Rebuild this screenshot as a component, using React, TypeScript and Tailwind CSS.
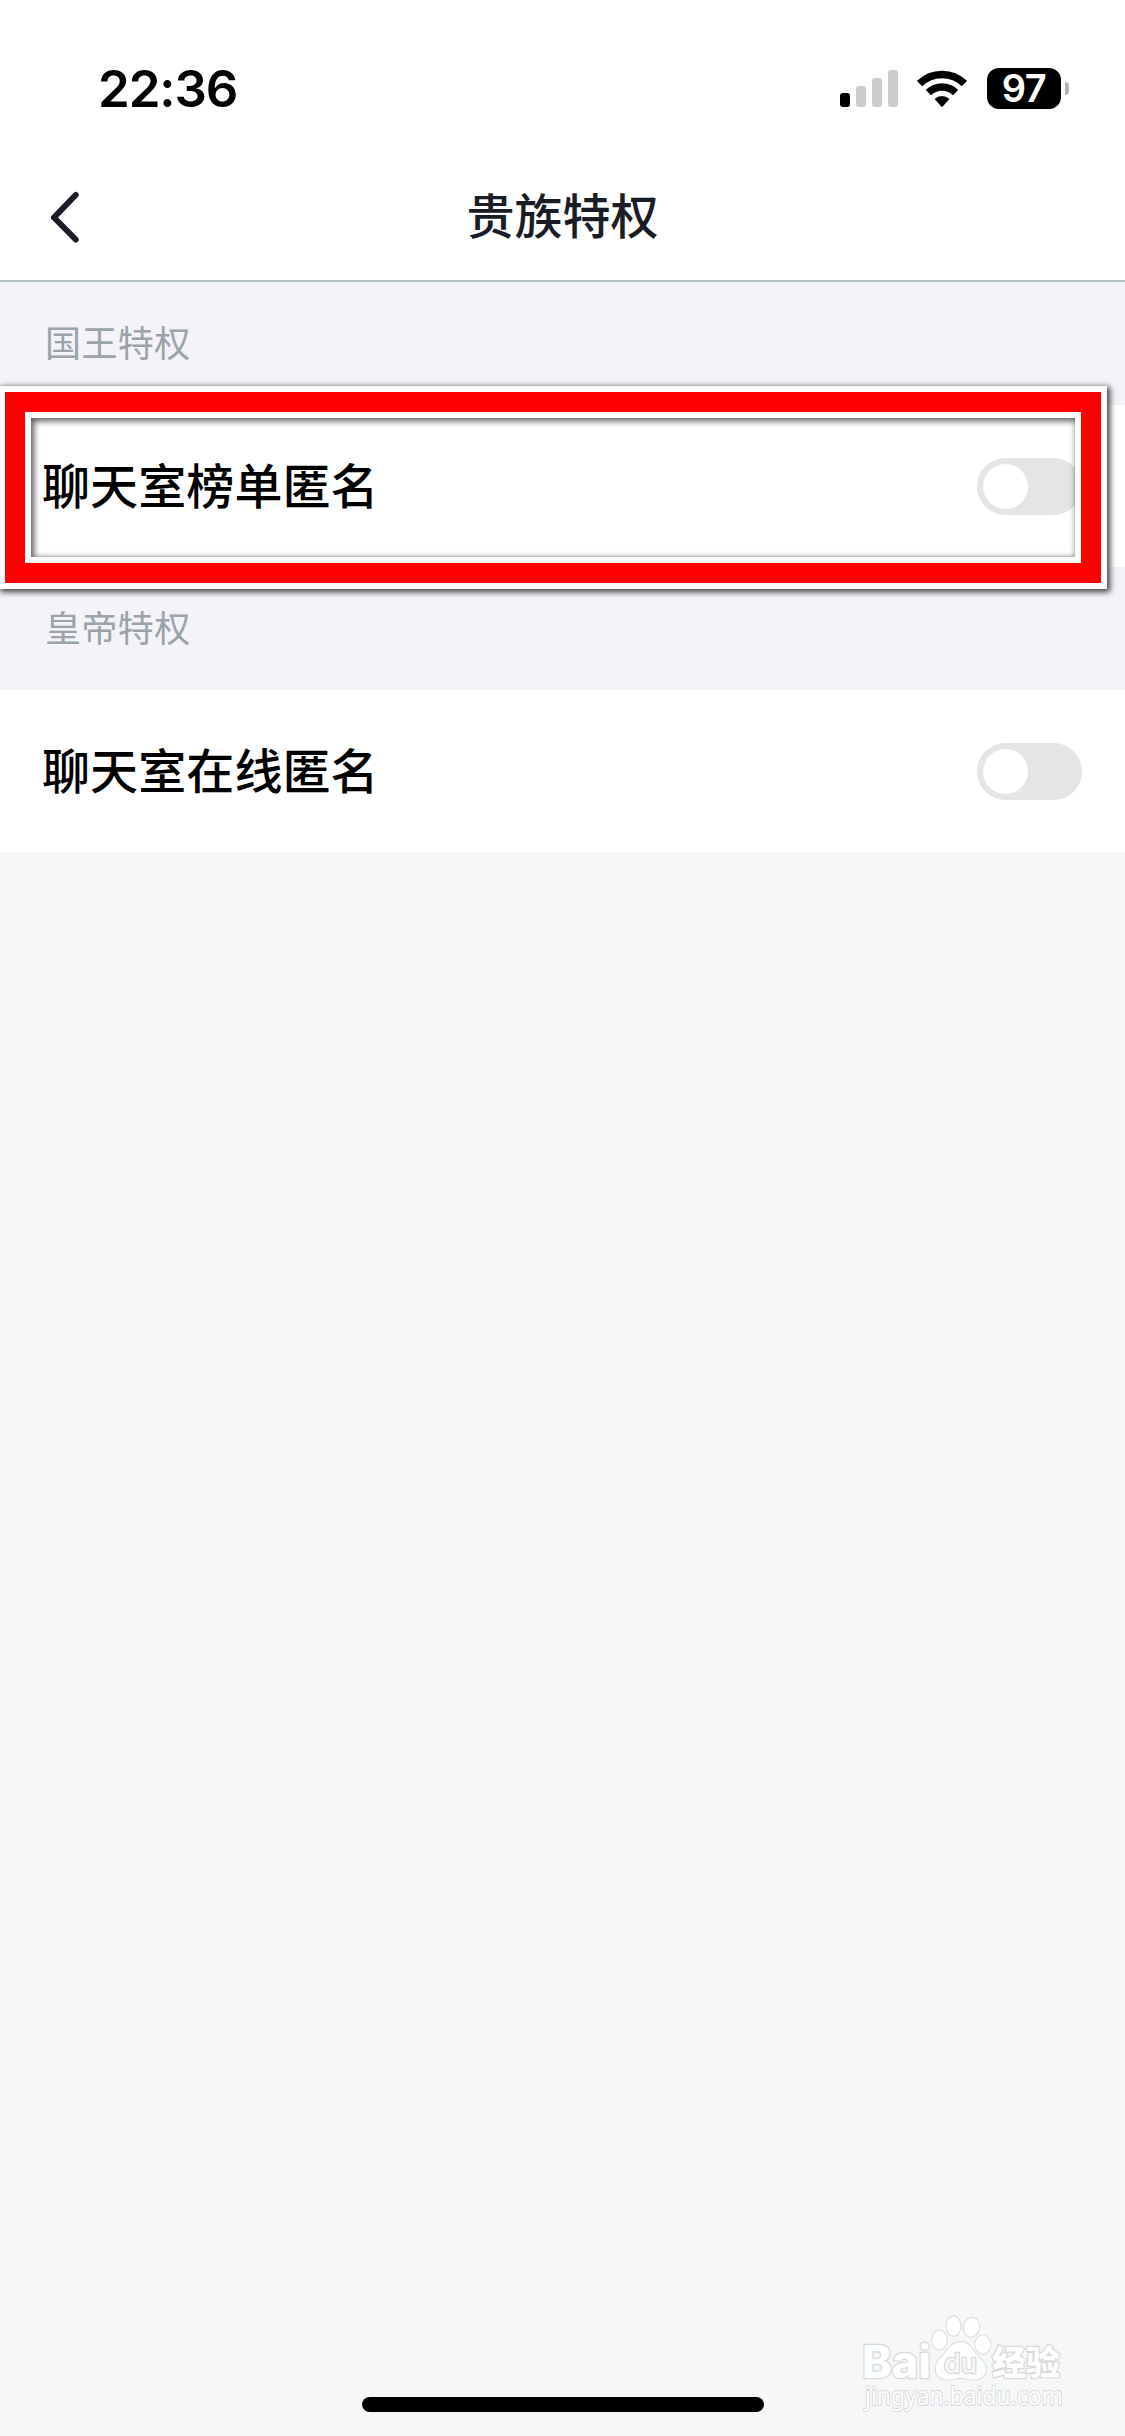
import React from 'react'

const SECTIONS = [
    { label: '国王特权', item: '聊天室榜单匿名', highlighted: true },
    { label: '皇帝特权', item: '聊天室在线匿名', highlighted: false },
]

function StatusBar() {
    return (
        <div className="flex h-[160px] justify-between pl-[98px] pr-[56px]">
            <span className="pt-[58px] font-['Inter',sans-serif] text-[51px] font-semibold leading-[62px] tracking-[-1.1px] text-black">
                22:36
            </span>
            <div className="flex h-[41px] mt-[68px] items-start">
                {/* Signal */}
                <div className="flex h-[39px] items-end gap-[6px]">
                    <div className="h-[14px] w-[10px] rounded-[3px] bg-black" />
                    <div className="h-[21px] w-[10px] rounded-[3px] bg-[#cccccc]" />
                    <div className="h-[29px] w-[10px] rounded-[3px] bg-[#cccccc]" />
                    <div className="h-[37px] w-[10px] rounded-[3px] bg-[#cccccc]" />
                </div>
                {/* Wifi */}
                <svg className="ml-[19px] mt-[2px]" width="50" height="37" viewBox="0 0 50 37" fill="none">
                    <path d="M2.6 13.6A32 32 0 0 1 47.4 13.6" stroke="#000" strokeWidth="7.6" />
                    <path d="M11.4 22.6A19.4 19.4 0 0 1 38.6 22.6" stroke="#000" strokeWidth="7.4" />
                    <path d="M17.6 29A10.8 10.8 0 0 1 32.4 29L25.7 36.4Q25 37 24.3 36.4Z" fill="#000" />
                </svg>
                {/* Battery */}
                <div className="ml-[20px] flex h-[41px] w-[74px] items-center justify-center rounded-[12px] bg-black font-['Inter',sans-serif] text-[38px] font-semibold leading-[41px] tracking-[-0.5px] text-white">
                    97
                </div>
                <div className="ml-[4px] mt-[14px] h-[13px] w-[4px] rounded-r-full bg-[#b3b3b3]" />
            </div>
        </div>
    )
}

function NavBar() {
    return (
        <div className="grid h-[122px] grid-cols-[200px_1fr_200px] border-b-2 border-[#b8c2ca]">
            <svg className="ml-[48px] mt-[29px]" width="36" height="56" viewBox="0 0 36 56" fill="none">
                <path d="M27.7 6L6 28.5L27.7 50.5" stroke="#1a1d26" strokeWidth="6" strokeLinecap="round" strokeLinejoin="round" />
            </svg>
            <h1 className="pt-[17px] text-center text-[48px] font-medium leading-[72px] text-[#1a1d26]">贵族特权</h1>
        </div>
    )
}

function Switch() {
    return (
        <div className="mt-[53px] h-[57px] w-[105px] rounded-full bg-[#e5e5e5] p-[6px]">
            <div className="size-[45px] rounded-full bg-white" />
        </div>
    )
}

function HighlightFrame() {
    return (
        <div className="absolute left-[-1px] top-[-19px] h-[203px] w-[1108px] border-[6px] border-white shadow-[2px_2px_6px_1px_rgba(0,0,0,0.75)]">
            <div className="h-full w-full border-[20px] border-[#ff0000]">
                <div className="h-full w-full border-[6px] border-white">
                    <div className="h-full w-full shadow-[inset_2px_2px_6px_1px_rgba(0,0,0,0.65)]" />
                </div>
            </div>
        </div>
    )
}

function Watermark() {
    return (
        <svg className="absolute left-[855px] top-[2305px]" width="220" height="125" viewBox="855 2305 220 125">
            <g fill="#fdfefe" stroke="#d6d8d9" strokeWidth="2.4" paintOrder="stroke" strokeLinejoin="round">
                <text x="862" y="2378" fontFamily="Inter, sans-serif" fontSize="45" fontWeight="800" textLength="69" lengthAdjust="spacingAndGlyphs">Bai</text>
                <g strokeWidth="1.8">
                    <ellipse cx="939.5" cy="2340" rx="7.5" ry="9.5" />
                    <ellipse cx="953.5" cy="2326" rx="7" ry="9.8" />
                    <ellipse cx="971.5" cy="2327.3" rx="7.8" ry="9.6" transform="rotate(12 971.5 2327.3)" />
                    <ellipse cx="982.8" cy="2344.5" rx="7.6" ry="9.2" />
                    <path d="M961 2342C968 2342 972 2348 976 2354C981 2360 986 2363 986 2369C986 2376 981 2379.500 974 2379.500C968 2379.500 966 2378 961 2378C956 2378 953 2379.500 947 2379.500C940 2379.500 935.500 2375 935.500 2368C935.500 2362 940 2359 945 2353C949 2348 953 2342 961 2342Z" />
                </g>
                <text x="944" y="2373" fontFamily="Inter, sans-serif" fontSize="27" fontWeight="500" textLength="33" lengthAdjust="spacingAndGlyphs" fill="#f5f7f9">du</text>
                <text x="992" y="2375" fontFamily="Noto Sans CJK SC, sans-serif" fontSize="34" fontWeight="900" textLength="68" lengthAdjust="spacingAndGlyphs">经验</text>
                <text x="865" y="2405" fontFamily="Noto Sans, sans-serif" fontSize="26" strokeWidth="1.8" textLength="198" lengthAdjust="spacingAndGlyphs">jingyan.baidu.com</text>
            </g>
        </svg>
    )
}

export default function App() {
    return (
        <main className="relative flex h-[2436px] w-[1125px] flex-col overflow-hidden bg-[#f5f7f9] font-['Noto_Sans_CJK_SC',sans-serif]">
            <header className="bg-white">
                <StatusBar />
                <NavBar />
            </header>

            {SECTIONS.map((section) => (
                <section key={section.label}>
                    <h2 className="h-[123px] bg-[#f4f3f8] pl-[45px] pt-[32px] text-[36px] font-normal leading-[54px] tracking-[0.4px] text-[#9aa3a9]">
                        {section.label}
                    </h2>
                    <div className="relative flex h-[162px] justify-between bg-white pl-[42px] pr-[43px]">
                        <span className="pt-[42px] text-[48px] font-medium leading-[72px] tracking-[0.1px] text-black">{section.item}</span>
                        <Switch />
                        {section.highlighted && <HighlightFrame />}
                    </div>
                </section>
            ))}

            {/* Home indicator */}
            <div className="mb-[24px] mt-auto ml-[362px] h-[15px] w-[402px] rounded-full bg-black" />
            <Watermark />
        </main>
    )
}
